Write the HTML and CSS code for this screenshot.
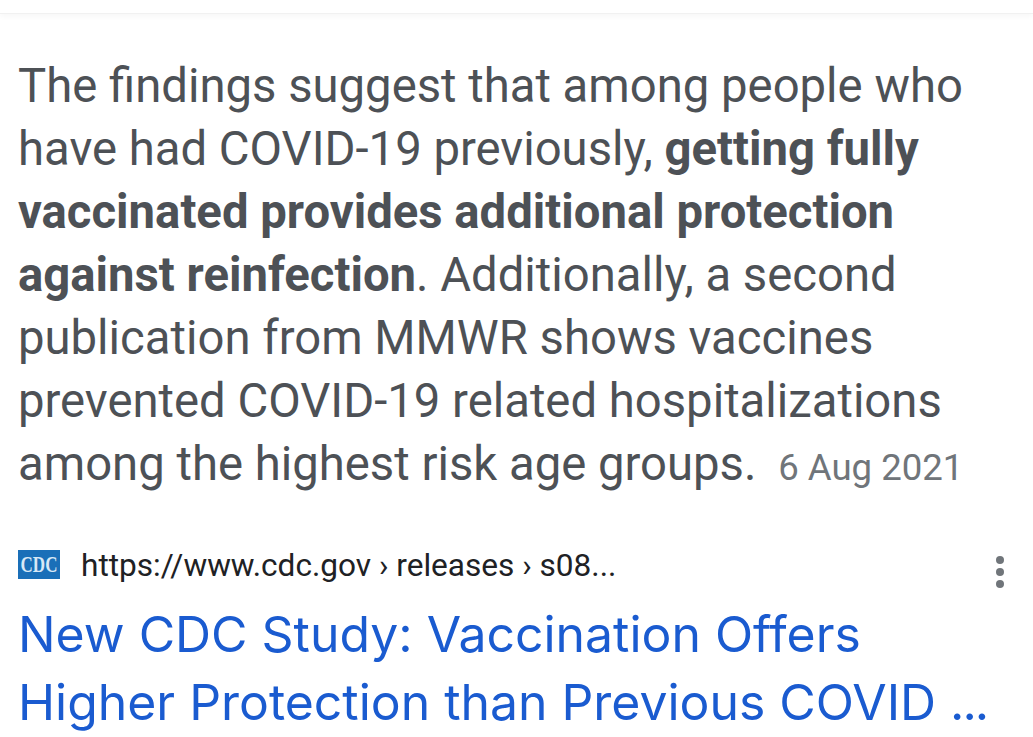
FILE: index.html
```html
<!DOCTYPE html>
<html lang="en">
<head>
    <meta charset="UTF-8">
    <title>New CDC Study</title>
    <link rel="stylesheet" href="styles.css">
</head>
<body>
    <div class="top-edge"></div>
    <main class="card">
        <p class="snippet">
            <span class="line">The findings suggest that among people who</span>
            <span class="line">have had COVID-19 previously, <b>getting fully</b></span>
            <span class="line"><b>vaccinated provides additional protection</b></span>
            <span class="line"><b>against reinfection</b>. Additionally, a second</span>
            <span class="line">publication from MMWR shows vaccines</span>
            <span class="line">prevented COVID-19 related hospitalizations</span>
            <span class="line">among the highest risk age groups. <span class="date">6 Aug 2021</span></span>
        </p>
        <div class="source">
            <svg class="favicon" viewBox="0 0 42 29" aria-hidden="true">
                <rect width="42" height="29" fill="#1a6fb8"/>
                <text x="21" y="16.2" text-anchor="middle" transform="scale(1 1.33)" class="favicon-text">CDC</text>
            </svg>
            <span class="url">https://www.cdc.gov › releases › s08...</span>
            <svg class="more" viewBox="0 0 10 34" aria-hidden="true">
                <circle cx="5" cy="5" r="4" />
                <circle cx="5" cy="17" r="4" />
                <circle cx="5" cy="29" r="4" />
            </svg>
        </div>
        <h3 class="title">
            <a href="#">New CDC Study: Vaccination Offers</a>
            <a href="#">Higher Protection than Previous COVID <span class="dots">...</span></a>
        </h3>
    </main>
</body>
</html>
```

FILE: styles.css
```css
html, body {
    margin: 0;
    padding: 0;
    height: 737px;
    overflow: hidden;
    background: #fff;
}

body {
    font-family: Roboto, "Liberation Sans", sans-serif;
}

.top-edge {
    height: 13px;
    border-bottom: 1px solid #f1f1f1;
    box-shadow: 0 2px 6px rgba(0, 0, 0, 0.04);
}

.card {
    padding: 41px 18px 0;
}

.snippet {
    margin: 0;
    font-size: 47.25px;
    line-height: 63px;
    color: #4d5156;
}

.line {
    display: block;
    white-space: nowrap;
}

.snippet b {
    font-weight: 700;
}

.date {
    font-size: 36.6px;
    color: #70757a;
    margin-left: 10px;
}

.source {
    display: flex;
    align-items: center;
    margin-top: 46px;
    height: 40px;
}

.favicon {
    width: 42px;
    height: 29px;
    flex: none;
    margin-top: -2px;
}

.favicon-text {
    font-family: "Liberation Serif", serif;
    font-size: 17px;
    font-weight: 700;
    fill: #d8e8f6;
}

.url {
    margin-left: 21px;
    font-size: 31.6px;
    color: #202124;
    flex: 1;
}

.more {
    width: 10px;
    height: 34px;
    fill: #70757a;
    margin-right: 10px;
    margin-top: 14px;
    flex: none;
}

.title {
    margin: 15px 0 0;
    font-family: Inter, Roboto, sans-serif;
    font-size: 49.9px;
    line-height: 68px;
    font-weight: 400;
}

.title a {
    display: block;
    color: #1a5bd0;
    text-decoration: none;
    white-space: nowrap;
}

.dots {
    letter-spacing: -2px;
}
```
